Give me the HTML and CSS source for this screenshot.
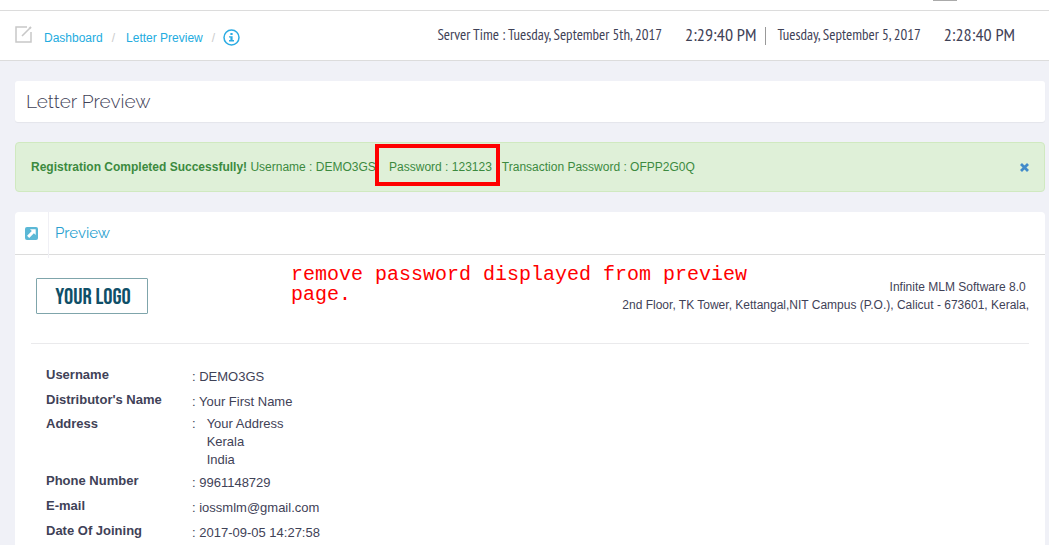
FILE: index.html
```
<!DOCTYPE html>
<html lang="en">
<head>
    <meta charset="UTF-8">
    <meta name="viewport" content="width=device-width, initial-scale=1.0">
    <title>Letter Preview</title>
    <link rel="stylesheet" href="styles.css">
</head>
<body>
    <div class="top-strip"><span class="tab-stub"></span></div>

    <header class="page-bar">
        <nav class="breadcrumb">
            <svg class="edit-icon" width="17" height="17" viewBox="0 0 17 17" fill="none" stroke="#c8c8c8">
                <path d="M12 1H1v15h15V6" stroke-width="1.5"/>
                <path d="M7 10l7-7" stroke-width="1.6"/>
                <path d="M14 3l2-2" stroke-width="2"/>
            </svg>
            <a href="#">Dashboard</a>
            <span class="slash">/</span>
            <a href="#">Letter Preview</a>
            <span class="slash last">/</span>
            <a href="#" class="info" aria-label="Help">
                <svg width="17" height="17" viewBox="0 0 17 17">
                    <circle cx="8.5" cy="8.5" r="7.5" fill="none" stroke="#2cace3" stroke-width="1.5"/>
                    <path d="M7.4 4h2.2v2H7.4zM6 7.2h3.6v3.9H11v1.4H6v-1.4h1.4V8.6H6z" fill="#2cace3"/>
                </svg>
            </a>
        </nav>
        <div class="clocks">
            <span class="date">Server Time : Tuesday, September 5th, 2017</span>
            <span class="time">2:29:40 PM</span>
            <span class="divider"></span>
            <span class="date">Tuesday, September 5, 2017</span>
            <span class="time">2:28:40 PM</span>
        </div>
    </header>

    <main class="content">
        <div class="title-box">
            <h1>Letter Preview</h1>
        </div>

        <div class="alert">
            <p><strong>Registration Completed Successfully!</strong> Username : DEMO3GS &nbsp;&nbsp;&nbsp;<span class="marked">Password : 123123</span> &nbsp;&nbsp;Transaction Password : OFPP2G0Q</p>
            <button type="button" class="close" aria-label="Close">
                <svg width="9" height="9" viewBox="0 0 9 9"><path d="M1 1l7 7M8 1l-7 7" stroke="#428bca" stroke-width="2.8"/></svg>
            </button>
        </div>

        <section class="panel">
            <div class="panel-heading">
                <span class="panel-icon">
                    <svg width="13" height="13" viewBox="0 0 13 13">
                        <rect width="13" height="13" rx="2" fill="#5bb8d6"/>
                        <path d="M5 2.3h5.7V8L8.9 6.2 4.2 10.9 2.1 8.8 6.8 4.1z" fill="#fff"/>
                    </svg>
                </span>
                <h2>Preview</h2>
            </div>
            <div class="panel-body">
                <div class="letter-head">
                    <div class="logo">YOUR LOGO</div>
                    <address>
                        Infinite MLM Software 8.0&nbsp;<br>
                        2nd Floor, TK Tower, Kettangal,NIT Campus (P.O.), Calicut - 673601, Kerala,
                    </address>
                    <p class="note">
                        <span>remove password displayed from preview</span>
                        <span>page.</span>
                    </p>
                </div>

                <table class="details">
                    <tr><th scope="row">Username</th><td>: DEMO3GS</td></tr>
                    <tr><th scope="row">Distributor's Name</th><td>: Your First Name</td></tr>
                    <tr class="address-row">
                        <th scope="row">Address</th>
                        <td><div class="address-value"><span>:</span><span>Your Address<br>Kerala<br>India</span></div></td>
                    </tr>
                    <tr><th scope="row">Phone Number</th><td>: 9961148729</td></tr>
                    <tr><th scope="row">E-mail</th><td>: iossmlm@gmail.com</td></tr>
                    <tr><th scope="row">Date Of Joining</th><td>: 2017-09-05 14:27:58</td></tr>
                </table>
            </div>
        </section>
    </main>
</body>
</html>
```
FILE: styles.css
```
* {
    box-sizing: border-box;
}

body {
    margin: 0;
    background: #f0f1f7;
    color: #3f4257;
    font-family: "Liberation Sans", Arial, sans-serif;
    font-size: 12px;
    line-height: 18px;
}

h1, h2, p {
    margin: 0;
}

svg {
    display: block;
}

a {
    color: #23ace0;
    text-decoration: none;
}

.top-strip {
    display: flex;
    justify-content: flex-end;
    height: 11px;
    padding-right: 92px;
    background: #fff;
    border-bottom: 1px solid #dcdcdc;
}

.tab-stub {
    width: 24px;
    height: 1px;
    background: #aaa;
}

/* breadcrumb and clocks */
.page-bar {
    display: flex;
    justify-content: space-between;
    height: 50px;
    padding: 0 34px 0 15px;
    background: #fff;
    border-bottom: 1px solid #dcdcdc;
}

.breadcrumb {
    display: flex;
    align-items: center;
    padding-top: 4px;
}

.edit-icon {
    margin: 0 12px 6px 0;
}

.slash {
    margin: 0 11px 0 9px;
    color: #ccc;
}

.slash.last {
    margin-right: 8px;
}

.clocks {
    display: flex;
    align-items: center;
    padding-bottom: 2px;
    font-family: "PT Sans Narrow", "Liberation Sans Narrow", "Open Sans Condensed", sans-serif;
    font-size: 15px;
    white-space: nowrap;
}

.time {
    margin-left: 23px;
    font-size: 18px;
}

.divider {
    width: 1px;
    height: 18px;
    margin: 2px 11px 0 9px;
    background: #999;
}

.content {
    padding: 20px 4px 0 15px;
}

.title-box {
    padding: 6px 11px;
    margin-bottom: 20px;
    background: #fff;
    border-radius: 3px;
    box-shadow: 0 1px 1px rgba(0, 0, 0, 0.05);
}

h1 {
    font-family: Raleway, Lato, sans-serif;
    font-size: 19px;
    font-weight: 300;
    line-height: 29px;
}

.alert {
    display: flex;
    align-items: center;
    justify-content: space-between;
    padding: 15px;
    margin-bottom: 20px;
    color: #3c8a3f;
    background: #dff0d8;
    border: 1px solid #d0e9c0;
    border-radius: 4px;
}

.marked {
    position: relative;
}

/* red frame drawn round the password */
.marked::after {
    content: "";
    position: absolute;
    inset: -16px -8px -12px -14px;
    border: 4px solid #f00;
}

.close {
    padding: 0;
    background: none;
    border: none;
    cursor: pointer;
}

.panel {
    background: #fff;
    border-radius: 4px;
}

.panel-heading {
    display: flex;
    height: 43px;
    border-bottom: 1px solid #dcdcdc;
}

.panel-icon {
    height: 46px;
    padding: 15px 10px 0;
    border-right: 1px solid #f0f0f5;
}

h2 {
    padding-left: 6px;
    color: #2a9fd0;
    font-family: Raleway, Lato, sans-serif;
    font-size: 15px;
    font-weight: 400;
    line-height: 42px;
}

.panel-body {
    padding: 23px 16px 20px;
}

.letter-head {
    position: relative;
    display: flex;
    align-items: flex-start;
    justify-content: space-between;
    height: 66px;
    padding-left: 5px;
    border-bottom: 1px solid #eaeaec;
}

.logo {
    width: 112px;
    padding: 2px 0 0 2px;
    color: #0f4f68;
    border: 1px solid #7fa5ab;
    border-radius: 1px;
    font-family: "Bebas Neue", "Liberation Sans Narrow", sans-serif;
    font-size: 23px;
    line-height: 32px;
    text-align: center;
}

address {
    font-style: normal;
    text-align: right;
}

.note {
    position: absolute;
    top: -13px;
    left: 260px;
    display: flex;
    flex-direction: column;
    align-items: flex-start;
    color: #f00;
    font-family: "Liberation Mono", monospace;
    font-size: 20px;
    line-height: 20px;
    white-space: nowrap;
}

.details {
    margin: 19px 0 0 15px;
    border-collapse: collapse;
    font-size: 13px;
}

.details th {
    width: 146px;
    padding: 3px 0 4px;
    text-align: left;
    vertical-align: top;
}

.details td {
    padding: 5px 0 2px;
    vertical-align: top;
}

.details .address-row th,
.details .address-row td {
    padding: 2px 0 0;
}

.address-value {
    display: flex;
    gap: 11px;
}
```
